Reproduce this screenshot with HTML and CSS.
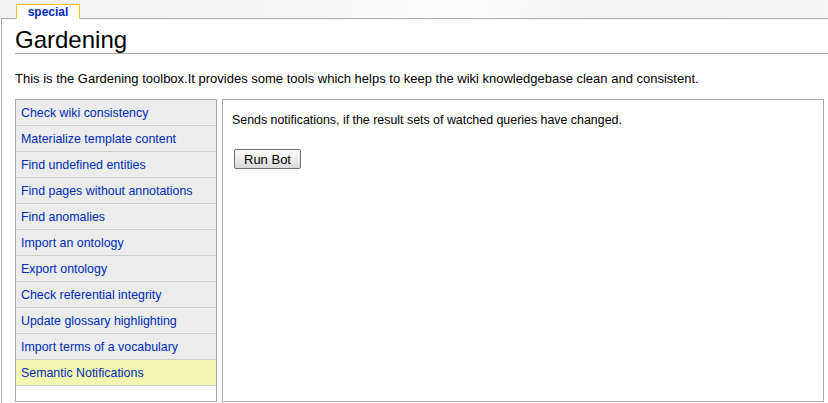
FILE: index.html
```html
<!DOCTYPE html>
<html>
<head>
<meta charset="utf-8">
<link rel="stylesheet" href="styles.css">
</head>
<body>
<div class="tabs"><div class="tab">special</div></div>
<div class="content">
  <h1 class="title">Gardening</h1>
  <p class="intro">This is the Gardening toolbox.It provides some tools which helps to keep the wiki knowledgebase clean and consistent.</p>
  <div class="tools">
    <div class="menu">
      <a class="item">Check wiki consistency</a>
      <a class="item">Materialize template content</a>
      <a class="item">Find undefined entities</a>
      <a class="item">Find pages without annotations</a>
      <a class="item">Find anomalies</a>
      <a class="item">Import an ontology</a>
      <a class="item">Export ontology</a>
      <a class="item">Check referential integrity</a>
      <a class="item">Update glossary highlighting</a>
      <a class="item">Import terms of a vocabulary</a>
      <a class="item active">Semantic Notifications</a>
    </div>
    <div class="panel">
      <p class="desc">Sends notifications, if the result sets of watched queries have changed.</p>
      <button class="btn">Run Bot</button>
    </div>
  </div>
</div>
</body>
</html>
```

FILE: styles.css
```css
html, body {
  margin: 0;
  padding: 0;
  height: 100%;
  overflow: hidden;
}
body {
  font-family: "Liberation Sans", Arial, sans-serif;
  background: #fff;
  color: #000;
}
.tabs {
  height: 18px;
  padding-left: 16px;
  display: flex;
  align-items: flex-end;
  background: linear-gradient(100deg, #f2f2f2 0%, #f7f7f7 40%, #fbfbfb 55%, #f3f3f3 75%, #f6f6f6 100%);
}
.tab {
  width: 62px;
  height: 14px;
  border: 1px solid #fabd23;
  border-bottom: none;
  background: #fff;
  color: #002bb8;
  font-weight: bold;
  font-size: 12px;
  line-height: 15px;
  text-align: center;
  position: relative;
  top: 1px;
}
.content {
  border-top: 1px solid #aaa;
  border-left: 1px solid #aaa;
  margin-left: 1px;
  padding-left: 13px;
  height: 400px;
}
.title {
  margin: 0;
  padding-top: 8px;
  font-size: 24px;
  font-weight: normal;
  line-height: 26px;
  height: 26px;
  border-bottom: 1px solid #aaa;
}
.intro {
  margin: 0;
  padding-top: 16px;
  font-size: 13px;
  line-height: 18px;
  height: 29px;
}
.tools {
  display: flex;
  gap: 5px;
  margin-right: 4px;
  height: 303px;
}
.menu {
  width: 200px;
  border: 1px solid #aaa;
  background: #fff;
  display: flex;
  flex-direction: column;
}
.item {
  display: block;
  height: 24px;
  padding-top: 1px;
  line-height: 24px;
  border-bottom: 1px solid #ccc;
  background: #ececec;
  color: #002bb8;
  font-size: 12.4px;
  padding-left: 5px;
}
.item.active {
  background: #f2f6b0;
}
.panel {
  flex: 1;
  border: 1px solid #aaa;
  padding: 12px 9px;
}
.desc {
  margin: 0;
  font-size: 12.4px;
  line-height: 16px;
}
.btn {
  margin-top: 21px;
  margin-left: 2px;
  width: 67px;
  height: 20px;
  padding: 0;
  font-family: "Liberation Sans", Arial, sans-serif;
  font-size: 13px;
  color: #000;
  border: 1px solid #6f6f6f;
  border-radius: 2px;
  background: linear-gradient(#fbfbfb, #ececec 50%, #d8d8d8);
}
```
